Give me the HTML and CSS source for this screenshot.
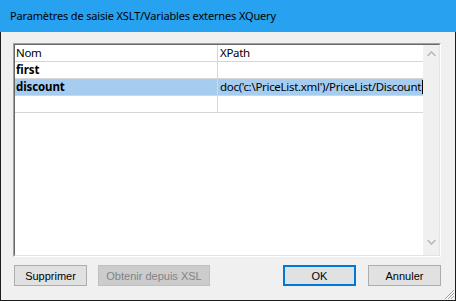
FILE: index.html
```html
<!DOCTYPE html>
<html>
<head>
<meta charset="utf-8">
<link rel="stylesheet" href="styles.css">
</head>
<body>
<div class="window">
  <div class="titlebar">Paramètres de saisie XSLT/Variables externes XQuery</div>
  <div class="client">
    <div class="listbox">
      <div class="inner">
        <div class="grid">
          <div class="row header">
            <div class="cell c1">Nom</div>
            <div class="cell c2">XPath</div>
          </div>
          <div class="row">
            <div class="cell c1 bold">first</div>
            <div class="cell c2"></div>
          </div>
          <div class="row selected">
            <div class="cell c1 bold">discount</div>
            <div class="cell c2">doc('c:\PriceList.xml')/PriceList/Discount<span class="caret"></span></div>
          </div>
          <div class="row">
            <div class="cell c1"></div>
            <div class="cell c2"></div>
          </div>
        </div>
        <div class="scrollbar">
          <svg class="arrow" width="9" height="6" viewBox="0 0 9 6"><path d="M0.5 5 L4.5 1 L8.5 5" fill="none" stroke="#b4b4b4" stroke-width="1.3"/></svg>
          <svg class="arrow" width="9" height="6" viewBox="0 0 9 6"><path d="M0.5 1 L4.5 5 L8.5 1" fill="none" stroke="#b4b4b4" stroke-width="1.3"/></svg>
        </div>
      </div>
    </div>
    <div class="buttons">
      <button class="btn">Supprimer</button>
      <button class="btn wide disabled">Obtenir depuis XSL</button>
      <button class="btn default">OK</button>
      <button class="btn">Annuler</button>
    </div>
    <svg class="grip" width="12" height="12" viewBox="0 0 12 12">
      <path d="M11 2 L2 11 M11 5 L5 11 M11 8 L8 11" stroke="#a0a0a0" stroke-width="1"/>
      <path d="M11 3 L3 11 M11 6 L6 11 M11 9 L9 11" stroke="#ffffff" stroke-width="1"/>
    </svg>
  </div>
</div>
</body>
</html>
```
FILE: styles.css
```css
* { box-sizing: border-box; }
html, body { margin: 0; padding: 0; background: #f0f0f0; }
body { font-family: "Noto Sans", "Liberation Sans", sans-serif; }
.window { width: 456px; height: 301px; display: flex; flex-direction: column; }
.titlebar {
  height: 32px;
  background: #27a2f0;
  color: #000;
  font-size: 11px;
  line-height: 32px;
  padding-left: 10px;
  letter-spacing: -0.15px;
}
.client {
  flex: 1;
  position: relative;
  background: #f0f0f0;
  border: 1px solid #1c1c1c;
  border-top: none;
  padding: 11px 14px 0 12px;
}
.listbox {
  height: 214px;
  border: 1px solid;
  border-color: #a0a0a0 #ffffff #ffffff #a0a0a0;
}
.inner {
  height: 100%;
  border: 1px solid;
  border-color: #696969 #e3e3e3 #e3e3e3 #696969;
  background: #fff;
  display: flex;
}
.grid { flex: 1; }
.row {
  display: flex;
  height: 17px;
  border-bottom: 1px solid #d6d6d6;
  font-size: 11.5px;
  line-height: 16px;
  letter-spacing: -0.3px;
}
.cell { overflow: hidden; white-space: nowrap; padding-left: 1px; }
.c1 { width: 203px; border-right: 1px solid #d6d6d6; }
.c2 { flex: 1; padding-left: 2px; }
.bold { font-weight: bold; letter-spacing: -0.1px; }
.selected { background: #a6cdf0; }
.caret { display: inline-block; width: 1px; height: 14px; background: #000; vertical-align: -3px; margin-left: 1px; }
.scrollbar {
  width: 17px;
  background: #f0f0f0;
  display: flex;
  flex-direction: column;
  justify-content: space-between;
  align-items: center;
  padding: 6px 0 10px;
}
.buttons {
  display: flex;
  gap: 11px;
  margin-top: 8px;
  padding-left: 1px;
}
.btn {
  width: 73px;
  height: 21px;
  background: #e1e1e1;
  border: 1px solid #adadad;
  font-family: "Liberation Sans", sans-serif;
  font-size: 11px;
  color: #000;
  padding: 0;
}
.wide { width: 112px; }
.disabled { background: #cccccc; border-color: #bfbfbf; color: #838383; }
.default { margin-left: auto; border: 2px solid #0078d7; margin-right: 1px; }
.grip { position: absolute; right: 0; bottom: 0; }
```
